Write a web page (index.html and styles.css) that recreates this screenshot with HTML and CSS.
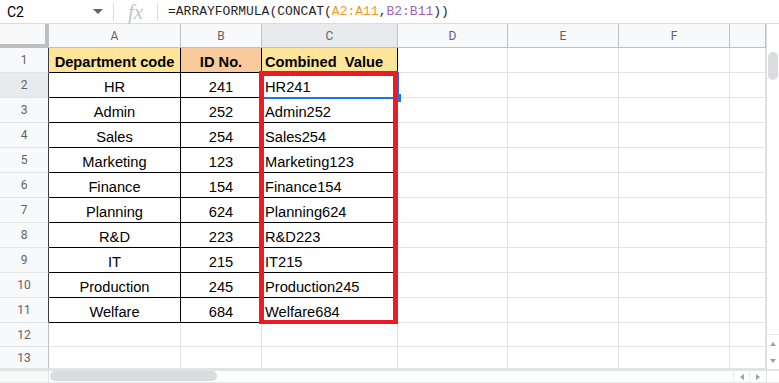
FILE: index.html
```html
<!DOCTYPE html>
<html lang="en">

<head>
    <meta charset="UTF-8">
    <meta name="viewport" content="width=device-width, initial-scale=1.0">

    <link rel="stylesheet" href="styles.css">

    <title>ARRAYFORMULA CONCAT</title>
</head>

<body>
    <div class="formula_bar">
        <div class="name_box">
            <span>C2</span>
            <span class="caret"></span>
        </div>
        <div class="divider"></div>
        <div class="fx">fx</div>
        <div class="divider"></div>
        <div class="formula">=ARRAYFORMULA(CONCAT(<span class="range_a">A2:A11</span>,<span class="range_b">B2:B11</span>))</div>
    </div>

    <div class="main">
        <div class="sheet">
            <!-- cabecera de columnas -->
            <div class="cell corner"></div>
            <div class="cell col_head">A</div>
            <div class="cell col_head">B</div>
            <div class="cell col_head active">C</div>
            <div class="cell col_head">D</div>
            <div class="cell col_head">E</div>
            <div class="cell col_head">F</div>
            <div class="cell col_head"></div>

            <!-- fila 1 -->
            <div class="cell row_head edge">1</div>
            <div class="cell tb center bold yellow">Department code</div>
            <div class="cell tb center bold orange">ID No.</div>
            <div class="cell tb bold yellow">Combined  Value</div>
            <div class="cell"></div>
            <div class="cell"></div>
            <div class="cell"></div>
            <div class="cell"></div>

            <!-- fila 2 -->
            <div class="cell row_head edge active">2</div>
            <div class="cell tb center">HR</div>
            <div class="cell tb center">241</div>
            <div class="cell tb">HR241</div>
            <div class="cell"></div>
            <div class="cell"></div>
            <div class="cell"></div>
            <div class="cell"></div>

            <div class="cell row_head edge">3</div>
            <div class="cell tb center">Admin</div>
            <div class="cell tb center">252</div>
            <div class="cell tb">Admin252</div>
            <div class="cell"></div>
            <div class="cell"></div>
            <div class="cell"></div>
            <div class="cell"></div>

            <div class="cell row_head edge">4</div>
            <div class="cell tb center">Sales</div>
            <div class="cell tb center">254</div>
            <div class="cell tb">Sales254</div>
            <div class="cell"></div>
            <div class="cell"></div>
            <div class="cell"></div>
            <div class="cell"></div>

            <div class="cell row_head edge">5</div>
            <div class="cell tb center">Marketing</div>
            <div class="cell tb center">123</div>
            <div class="cell tb">Marketing123</div>
            <div class="cell"></div>
            <div class="cell"></div>
            <div class="cell"></div>
            <div class="cell"></div>

            <div class="cell row_head edge">6</div>
            <div class="cell tb center">Finance</div>
            <div class="cell tb center">154</div>
            <div class="cell tb">Finance154</div>
            <div class="cell"></div>
            <div class="cell"></div>
            <div class="cell"></div>
            <div class="cell"></div>

            <div class="cell row_head edge">7</div>
            <div class="cell tb center">Planning</div>
            <div class="cell tb center">624</div>
            <div class="cell tb">Planning624</div>
            <div class="cell"></div>
            <div class="cell"></div>
            <div class="cell"></div>
            <div class="cell"></div>

            <div class="cell row_head edge">8</div>
            <div class="cell tb center">R&amp;D</div>
            <div class="cell tb center">223</div>
            <div class="cell tb">R&amp;D223</div>
            <div class="cell"></div>
            <div class="cell"></div>
            <div class="cell"></div>
            <div class="cell"></div>

            <div class="cell row_head edge">9</div>
            <div class="cell tb center">IT</div>
            <div class="cell tb center">215</div>
            <div class="cell tb">IT215</div>
            <div class="cell"></div>
            <div class="cell"></div>
            <div class="cell"></div>
            <div class="cell"></div>

            <div class="cell row_head edge">10</div>
            <div class="cell tb center">Production</div>
            <div class="cell tb center">245</div>
            <div class="cell tb">Production245</div>
            <div class="cell"></div>
            <div class="cell"></div>
            <div class="cell"></div>
            <div class="cell"></div>

            <div class="cell row_head edge">11</div>
            <div class="cell tb center">Welfare</div>
            <div class="cell tb center">684</div>
            <div class="cell tb">Welfare684</div>
            <div class="cell"></div>
            <div class="cell"></div>
            <div class="cell"></div>
            <div class="cell"></div>

            <!-- filas vacias -->
            <div class="cell row_head">12</div>
            <div class="cell"></div>
            <div class="cell"></div>
            <div class="cell"></div>
            <div class="cell"></div>
            <div class="cell"></div>
            <div class="cell"></div>
            <div class="cell"></div>

            <div class="cell row_head">13</div>
            <div class="cell"></div>
            <div class="cell"></div>
            <div class="cell"></div>
            <div class="cell"></div>
            <div class="cell"></div>
            <div class="cell"></div>
            <div class="cell"></div>

            <!-- seleccion y recuadro rojo encima de las celdas -->
            <div class="selection"></div>
            <div class="handle"></div>
            <div class="red_box"></div>
        </div>

        <div class="vscroll">
            <div class="vthumb"></div>
            <div class="varrows">
                <span class="arrow up"></span>
                <span class="arrow down"></span>
            </div>
        </div>
    </div>

    <div class="hscroll">
        <div class="hscroll_left"></div>
        <div class="hscroll_track">
            <div class="hthumb"></div>
        </div>
        <div class="hbtn"><span class="arrow left"></span></div>
        <div class="hbtn"><span class="arrow right"></span></div>
        <div class="hscroll_corner"></div>
    </div>
</body>

</html>
```

FILE: styles.css
```css
body {
    margin: 0;
    width: 779px;
    height: 383px;
    overflow: hidden;
    background-color: #ffffff;
    font-family: Roboto, "Liberation Sans", Arial, sans-serif;
}

/* barra de formula */
.formula_bar {
    height: 24px;
    box-sizing: border-box;
    border-bottom: 1px solid #dadce0;
    display: flex;
    align-items: center;
}

.name_box {
    width: 113px;
    height: 100%;
    box-sizing: border-box;
    padding-left: 7px;
    padding-right: 10px;
    display: flex;
    align-items: center;
    font-size: 14px;
    color: #000000;
}

.caret {
    margin-left: auto;
    width: 0;
    height: 0;
    border-left: 5px solid transparent;
    border-right: 5px solid transparent;
    border-top: 5px solid #5f6368;
}

.divider {
    width: 1px;
    height: 18px;
    background-color: #e0e0e0;
}

.fx {
    width: 43px;
    text-align: center;
    font-family: "Liberation Serif", serif;
    font-style: italic;
    font-size: 21px;
    line-height: 22px;
    color: #c4c4c4;
}

.formula {
    padding-left: 10px;
    font-family: "Liberation Mono", monospace;
    font-size: 13px;
    color: #1f1f1f;
    white-space: nowrap;
}

.range_a {
    color: #f29b1d;
}

.range_b {
    color: #9c64b4;
}

/* hoja */
.main {
    height: 345px;
    display: flex;
}

.sheet {
    position: relative;
    width: 766px;
    display: grid;
    grid-template-columns: 49px 132px 81px 136px 110px 111px 111px 36px;
    grid-template-rows: 24px repeat(11, 25px) 24px 22px;
}

.cell {
    box-sizing: border-box;
    border-right: 1px solid #e2e3e3;
    border-bottom: 1px solid #e2e3e3;
    display: flex;
    align-items: flex-end;
    padding: 0 3px 1px 3px;
    font-family: "Liberation Sans", Arial, sans-serif;
    font-size: 11pt;
    line-height: 17px;
    color: #000000;
    white-space: pre;
    overflow: hidden;
}

.center {
    justify-content: center;
}

.bold {
    font-weight: bold;
}

.yellow {
    background-color: #ffe599;
}

.orange {
    background-color: #f9cb9c;
}

.tb {
    border-right-color: #000000;
    border-bottom-color: #000000;
}

.col_head,
.row_head {
    background-color: #f8f9fa;
    border-right-color: #c0c0c0;
    border-bottom-color: #c0c0c0;
    align-items: center;
    justify-content: center;
    padding: 1px 0 0 0;
    font-family: Roboto, "Liberation Sans", sans-serif;
    font-size: 12px;
    color: #5f6368;
}

.row_head {
    border-bottom-color: #e2e3e3;
}

.row_head.edge {
    border-right-color: #3c3c3c;
}

.active {
    background-color: #e8eaed;
}

.corner {
    background-color: #f8f9fa;
    border-right: 4px solid #bfbfbf;
    border-bottom: 4px solid #bfbfbf;
}

.selection {
    position: absolute;
    left: 262px;
    top: 48px;
    width: 137px;
    height: 27px;
    box-sizing: border-box;
    border: 2px solid #1a73e8;
}

.handle {
    position: absolute;
    left: 395px;
    top: 70px;
    width: 6px;
    height: 8px;
    background-color: #1a73e8;
}

.red_box {
    position: absolute;
    left: 259px;
    top: 47px;
    width: 139px;
    height: 253px;
    box-sizing: border-box;
    border-style: solid;
    border-color: #ed1c24;
    border-width: 5px 5px 4px 5px;
}

/* barras de desplazamiento */
.vscroll {
    width: 13px;
    box-sizing: border-box;
    border-left: 1px solid #dadce0;
    display: flex;
    flex-direction: column;
}

.vthumb {
    margin: 28px 0 0 1px;
    width: 10px;
    height: 28px;
    border-radius: 5px;
    background-color: #dadce0;
}

.varrows {
    margin-top: auto;
    height: 34px;
    border-top: 1px solid #e8eaed;
    display: flex;
    flex-direction: column;
    align-items: center;
    justify-content: space-around;
}

.arrow {
    width: 0;
    height: 0;
}

.up {
    border-left: 3px solid transparent;
    border-right: 3px solid transparent;
    border-bottom: 4px solid #9aa0a6;
}

.down {
    border-left: 3px solid transparent;
    border-right: 3px solid transparent;
    border-top: 4px solid #9aa0a6;
}

.left {
    border-top: 3px solid transparent;
    border-bottom: 3px solid transparent;
    border-right: 4px solid #9aa0a6;
}

.right {
    border-top: 3px solid transparent;
    border-bottom: 3px solid transparent;
    border-left: 4px solid #9aa0a6;
}

.hscroll {
    height: 14px;
    box-sizing: border-box;
    border-top: 2px solid #e2e3e3;
    border-bottom: 1px solid #e8eaed;
    display: flex;
}

.hscroll_left {
    width: 49px;
    box-sizing: border-box;
    background-color: #f8f9fa;
    border-right: 1px solid #e2e3e3;
}

.hscroll_track {
    flex: 1;
    padding-left: 1px;
}

.hthumb {
    width: 167px;
    height: 10px;
    border-radius: 5px;
    background-color: #dadce0;
}

.hbtn {
    width: 16px;
    box-sizing: border-box;
    border-left: 1px solid #e8eaed;
    display: flex;
    align-items: center;
    justify-content: center;
}

.hbtn + .hbtn {
    width: 17px;
}

.hscroll_corner {
    width: 13px;
    box-sizing: border-box;
    border-left: 1px solid #e2e3e3;
}
```
